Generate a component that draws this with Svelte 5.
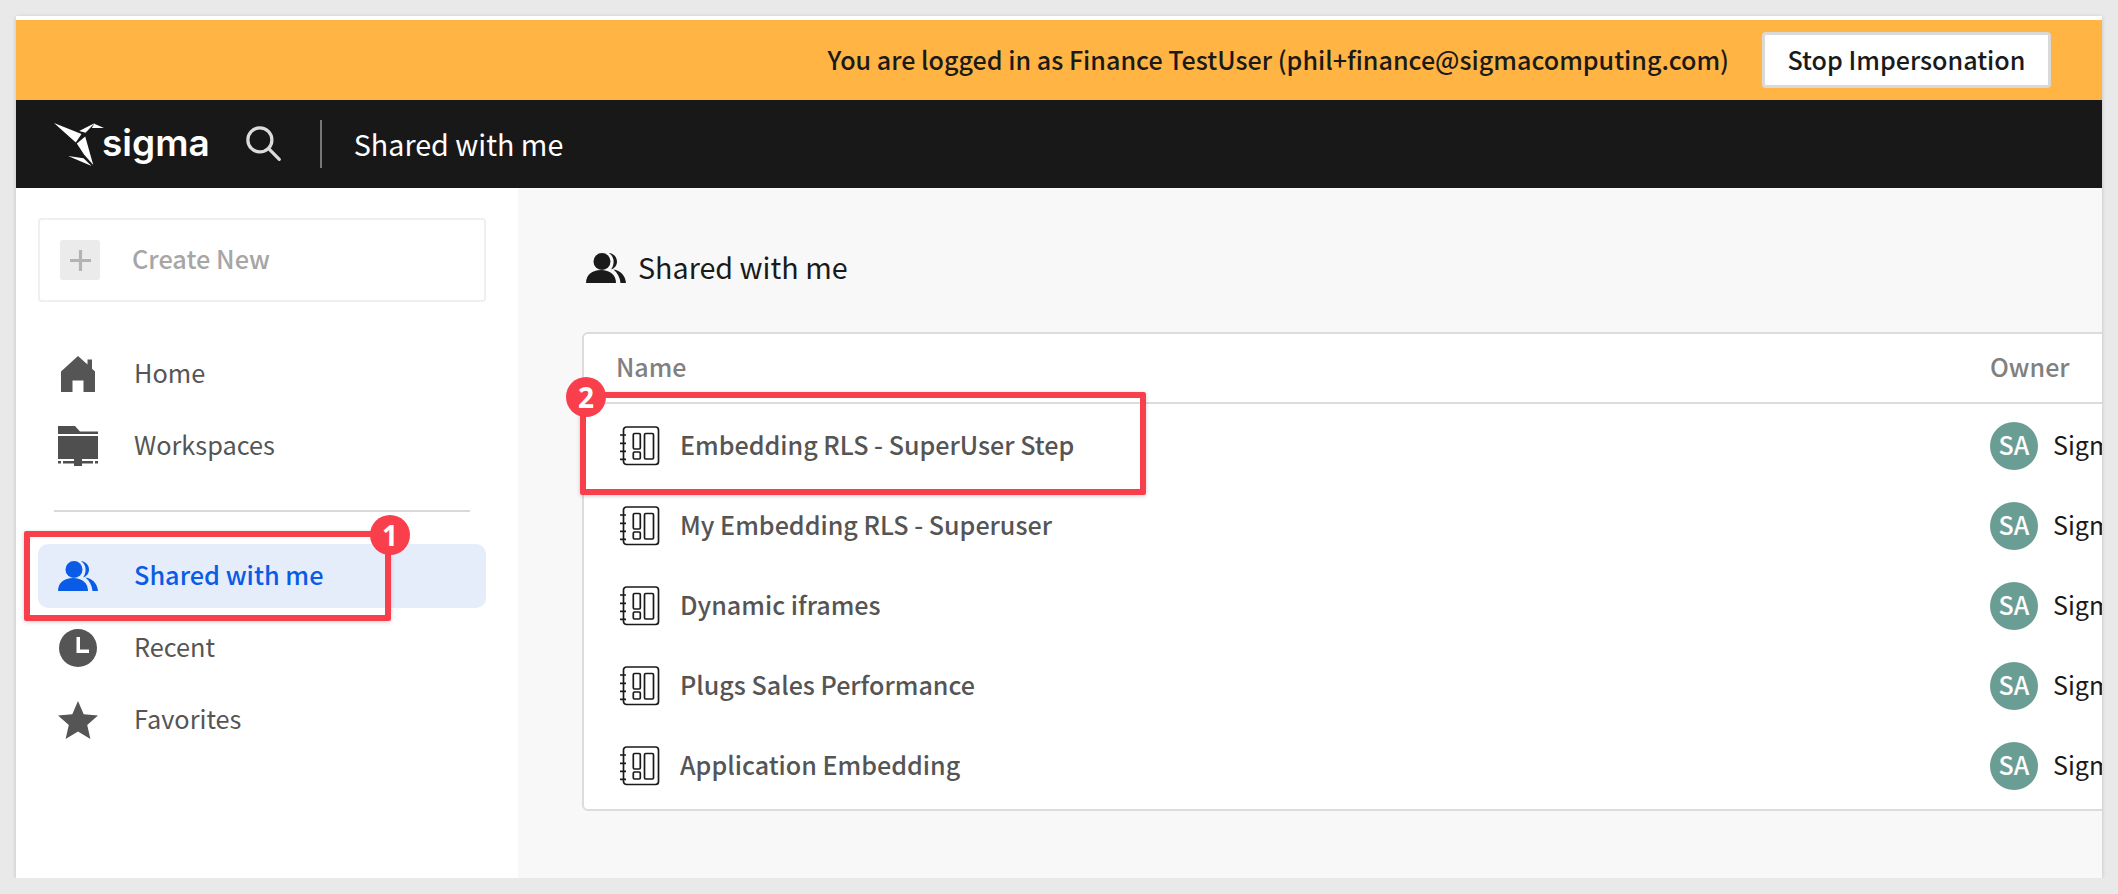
<script lang="ts">
  const docs = [
    'Embedding RLS - SuperUser Step',
    'My Embedding RLS - Superuser',
    'Dynamic iframes',
    'Plugs Sales Performance',
    'Application Embedding'
  ];
</script>

{#snippet people()}
  <svg class="ico" viewBox="0 0 40 30" aria-hidden="true">
    <circle cx="16" cy="8.500" r="8.500" fill="currentColor" />
    <path d="M0 30c0-8 6-13 15-13s15 5 15 13z" fill="currentColor" />
    <path d="M23 0c4.500.5 8 4 8 8.500 0 4-2.500 7-6 8 1.800-2.300 2.600-5 2.600-8C27.600 5 26 2.200 23 0z" fill="currentColor" />
    <path d="M27.500 16.500c7 1 11.800 6 12.500 13.500h-5.500c-.5-5.500-3-10-7-13.500z" fill="currentColor" />
  </svg>
{/snippet}

{#snippet notebook()}
  <svg class="book" viewBox="0 0 40 40" fill="none" stroke="#1a1a1a" stroke-width="1.700" aria-hidden="true">
    <rect x="3.500" y="1" width="35" height="37.500" rx="3" />
    <path d="M0 9h6M0 17.300h6M0 25.300h6M0 33.300h6" />
    <rect x="13.300" y="7.500" width="7" height="15.500" rx="1.200" />
    <rect x="13.300" y="26" width="7" height="7" rx="1.200" />
    <rect x="24.500" y="7.500" width="9" height="25.500" rx="1.200" />
  </svg>
{/snippet}

<div class="window">
  <div class="banner">
    <span class="up">You are logged in as Finance TestUser (phil+finance@sigmacomputing.com)</span>
    <button class="stop">Stop Impersonation</button>
  </div>

  <header class="topbar">
    <svg class="mark" viewBox="43 67 149 128" fill="#fff" aria-hidden="true">
      <path d="M43 67l82 33-17 25z" />
      <path d="M118 91l47-24-28 29z" />
      <path d="M163 69l29 13h-36z" />
      <path d="M111 128l25-21 24 85-28-32z" />
      <path d="M85 165l46 7 24 23z" />
    </svg>
    <span class="wordmark">sigma</span>
    <svg class="search" viewBox="0 0 40 40" fill="none" stroke="#dcdcdc" stroke-width="3.500" stroke-linecap="round" aria-hidden="true">
      <circle cx="15" cy="15" r="13" />
      <path d="M24.500 24.500L36 36" />
    </svg>
    <span class="rule"></span>
    <span class="crumb">Shared with me</span>
  </header>

  <div class="body">
    <aside class="sidebar">
      <div class="create">
        <span class="plus">
          <svg viewBox="0 0 20 20" aria-hidden="true"><path d="M8.500 0h3v8.500H20v3h-8.500V20h-3v-8.500H0v-3h8.500z" fill="#b3b3b3" /></svg>
        </span>
        <span class="t">Create New</span>
      </div>

      <nav class="nav">
        <div class="item">
          <svg class="ico" viewBox="0 0 40 36" aria-hidden="true">
            <path d="M3 36V15.500L20 0l9.500 8.500V3.500h4.500v9.200L37 15.500V36H25.500V24.500h-11V36z" fill="#555" />
          </svg>
          <span class="t">Home</span>
        </div>
        <div class="item">
          <svg class="ico" viewBox="0 0 40 40" aria-hidden="true">
            <path d="M0 0h17l5 5.500h18v2.500H0zM0 10h40v23H0z" fill="#4f4f4f" />
            <path d="M16 30h8v5h16v2.500H24V40h-8v-2.500H0V35h16z" fill="#4f4f4f" />
            <path d="M3 34.500h2v3.500H3zM35 34.500h2v3.500h-2z" fill="#fff" />
          </svg>
          <span class="t">Workspaces</span>
        </div>
      </nav>

      <div class="divider"></div>

      <nav class="nav">
        <div class="item active">
          {@render people()}
          <span class="t">Shared with me</span>
          <span class="callout one"><span class="badge">1</span></span>
        </div>
        <div class="item">
          <svg class="ico" viewBox="0 0 40 40" aria-hidden="true">
            <circle cx="20" cy="20" r="19" fill="#555" />
            <path d="M18.500 9h3.500v12.500h9v3.500H18.500z" fill="#fff" />
          </svg>
          <span class="t">Recent</span>
        </div>
        <div class="item">
          <svg class="ico" viewBox="0 0 40 38" aria-hidden="true">
            <path d="M20 0l5.700 13.200L40 14.500 29.200 24l3.200 14L20 30.600 7.600 38l3.200-14L0 14.500l14.300-1.300z" fill="#555" />
          </svg>
          <span class="t">Favorites</span>
        </div>
      </nav>
    </aside>

    <main class="content">
      <h1>{@render people()} <span class="up">Shared with me</span></h1>

      <div class="table">
        <div class="row head">
          <span class="name t">Name</span>
          <span class="owner t">Owner</span>
        </div>
        {#each docs as doc, i}
          <div class="row">
            {#if i === 0}
              <span class="callout two"><span class="badge">2</span></span>
            {/if}
            <span class="name doc">{@render notebook()} <span class="t">{doc}</span></span>
            <span class="owner who"><span class="avatar"><span class="t">SA</span></span><span class="t">Sigma Admin</span></span>
          </div>
        {/each}
      </div>
    </main>
  </div>
</div>

<style>
  :global(body) {
    margin: 0;
    background: #e9e9e9;
    font-family: "Noto Sans CJK JP", "Noto Sans", sans-serif;
  }

  .window {
    width: 2086px;
    height: 862px;
    margin: 16px 0 0 16px;
    padding-top: 4px;
    box-sizing: border-box;
    background: #fff;
    box-shadow: 0 1px 4px rgba(0, 0, 0, 0.18);
    display: flex;
    flex-direction: column;
    overflow: hidden;
  }

  .banner {
    height: 80px;
    flex: none;
    background: #ffb444;
    display: flex;
    align-items: center;
    justify-content: flex-end;
    gap: 33px;
    padding-right: 51px;
    color: #1a1a1a;
    font-size: 25.100px;
    font-weight: 500;
  }

  /* Noto's line box sits the glyphs low, so nudge text up inside flex rows */
  .up {
    margin-top: -3px;
  }

  .t {
    margin-top: -5px;
  }

  .stop {
    width: 289px;
    height: 56px;
    box-sizing: border-box;
    border: 3px solid #d9d9d9;
    border-radius: 4px;
    background: #fff;
    color: #1a1a1a;
    padding: 0 0 3px;
    font: 500 25.100px "Noto Sans CJK JP", sans-serif;
  }

  .topbar {
    height: 88px;
    flex: none;
    background: #181818;
    display: flex;
    align-items: center;
    padding-left: 38px;
    color: #fff;
  }

  .mark {
    width: 50px;
    height: 43px;
    margin-top: 1px;
  }

  .wordmark {
    margin-left: -2px;
    font: 600 37px Inter, sans-serif;
    margin-top: -3px;
  }

  .search {
    width: 37px;
    height: 37px;
    margin-left: 36px;
  }

  .rule {
    width: 2px;
    height: 48px;
    margin-left: 37px;
    background: #777;
  }

  .crumb {
    margin-left: 32px;
    margin-top: -2px;
    font-size: 28.700px;
    font-weight: 400;
  }

  .body {
    flex: 1;
    display: flex;
    min-height: 0;
  }

  .sidebar {
    width: 502px;
    flex: none;
    box-sizing: border-box;
    padding: 30px 32px 0 22px;
  }

  .create {
    height: 84px;
    box-sizing: border-box;
    border: 2px solid #efefef;
    border-radius: 4px;
    display: flex;
    align-items: center;
    gap: 32px;
    padding-left: 20px;
    color: #a6a6a6;
    font-size: 25.300px;
    font-weight: 500;
  }

  .plus {
    width: 40px;
    height: 40px;
    border-radius: 3px;
    background: #ebebeb;
    display: flex;
    align-items: center;
    justify-content: center;
  }

  .plus svg {
    width: 21px;
    height: 21px;
  }

  .nav {
    display: flex;
    flex-direction: column;
    gap: 8px;
    margin-top: 40px;
  }

  .divider + .nav {
    margin-top: 32px;
  }

  .item {
    position: relative;
    height: 64px;
    display: flex;
    align-items: center;
    gap: 36px;
    padding-left: 20px;
    border-radius: 10px;
    color: #555;
    font-size: 25.300px;
    font-weight: 400;
  }

  .ico {
    width: 40px;
    flex: none;
  }

  .active {
    background: #e6edfa;
    color: #0a5ce6;
    font-weight: 500;
  }

  .divider {
    height: 2px;
    margin: 32px 16px 0;
    background: #d9d9d9;
  }

  .content {
    flex: 1;
    min-width: 0;
    background: #f8f8f8;
    padding: 58px 0 0 65px;
  }

  h1 {
    margin: 0 0 42px 3px;
    display: flex;
    align-items: center;
    gap: 12px;
    height: 44px;
    color: #1a1a1a;
    font-size: 28.700px;
    font-weight: 400;
  }

  .table {
    width: 1600px;
    height: 479px;
    margin-left: -1px;
    box-sizing: border-box;
    border: 2px solid #dcdcdc;
    border-radius: 6px;
    background: #fff;
  }

  .row {
    position: relative;
    height: 80px;
    display: flex;
    align-items: center;
    padding-left: 32px;
    font-size: 25.100px;
  }

  .row.head {
    height: 68px;
    margin-bottom: 2px;
    border-bottom: 2px solid #dcdcdc;
    color: #808080;
    font-weight: 500;
    font-size: 25px;
  }

  .name {
    width: 1374px;
    flex: none;
  }

  .doc {
    display: flex;
    align-items: center;
    gap: 20px;
    margin-left: 4px;
    width: 1370px;
    color: #555;
    font-weight: 500;
  }

  .book {
    width: 40px;
    height: 40px;
    flex: none;
  }

  .who {
    display: flex;
    align-items: center;
    gap: 15px;
    color: #1a1a1a;
    white-space: nowrap;
  }

  .avatar {
    width: 48px;
    height: 48px;
    border-radius: 50%;
    background: #6a9e94;
    color: #fff;
    font-size: 25px;
    font-weight: 500;
    display: flex;
    align-items: center;
    justify-content: center;
  }

  /* Red annotations drawn over the UI */
  .callout {
    position: absolute;
    box-sizing: border-box;
    border: 6px solid #f93e4c;
    border-radius: 2px;
    box-shadow: 0 1px 4px rgba(0, 0, 0, 0.2);
    z-index: 2;
  }

  .callout.one {
    left: -14px;
    top: -13px;
    width: 367px;
    height: 90px;
  }

  .callout.two {
    left: -4px;
    top: -14px;
    width: 566px;
    height: 103px;
  }

  .badge {
    position: absolute;
    width: 40px;
    height: 40px;
    border-radius: 50%;
    background: #f93e4c;
    color: #fff;
    font: 700 28px/40px "Open Sans", sans-serif;
    text-align: center;
  }

  .one .badge {
    top: -22px;
    right: -25px;
  }

  .two .badge {
    left: -20px;
    top: -21px;
  }
</style>
